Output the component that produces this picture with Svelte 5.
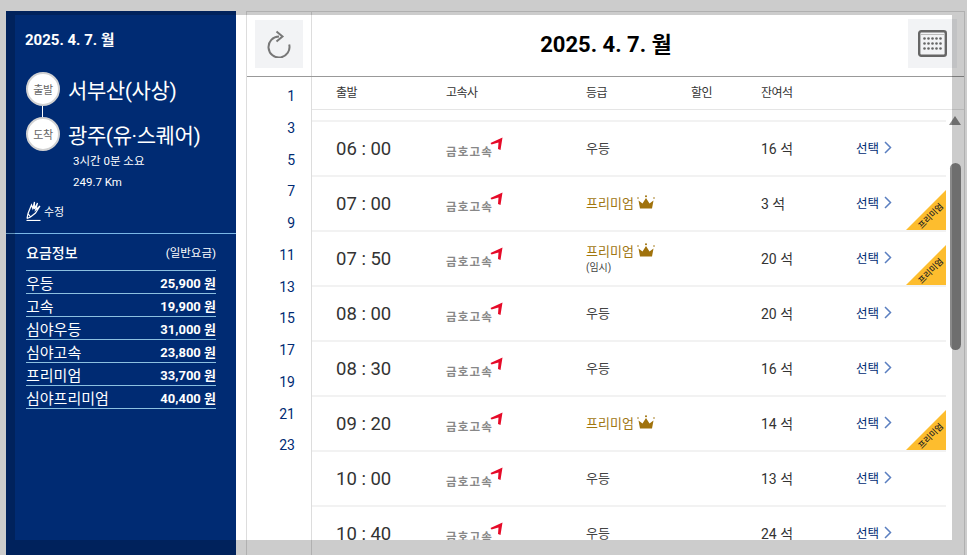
<script>
  // Fare table and departures for the selected route
  const fares = [
    { name: '우등', price: '25,900 원' },
    { name: '고속', price: '19,900 원' },
    { name: '심야우등', price: '31,000 원' },
    { name: '심야고속', price: '23,800 원' },
    { name: '프리미엄', price: '33,700 원' },
    { name: '심야프리미엄', price: '40,400 원' }
  ];

  const hours = [1, 3, 5, 7, 9, 11, 13, 15, 17, 19, 21, 23];

  const rows = [
    { time: '06 : 00', grade: '우등', seats: '16 석' },
    { time: '07 : 00', grade: '프리미엄', seats: '3 석', premium: true },
    { time: '07 : 50', grade: '프리미엄', seats: '20 석', premium: true, temp: true },
    { time: '08 : 00', grade: '우등', seats: '20 석' },
    { time: '08 : 30', grade: '우등', seats: '16 석' },
    { time: '09 : 20', grade: '프리미엄', seats: '14 석', premium: true },
    { time: '10 : 00', grade: '우등', seats: '13 석' },
    { time: '10 : 40', grade: '우등', seats: '24 석' }
  ];
</script>

<div class="modal">
  <aside class="side">
    <div class="date">2025. 4. 7. 월</div>
    <div class="route">
      <div class="stop">
        <span class="dot">출발</span>
        <span class="place">서부산(사상)</span>
      </div>
      <div class="stop">
        <span class="dot">도착</span>
        <span class="place">광주(유·스퀘어)</span>
      </div>
    </div>
    <div class="meta">3시간 0분 소요</div>
    <div class="meta">249.7 Km</div>
    <div class="edit">
      <svg width="15" height="20" viewBox="0 0 15 20" fill="none" stroke="#fff" stroke-width="1.2">
        <path d="M1 17.5 L2 12.5 L5.5 4 L6.8 7.5 L8.5 1 L8.2 8 L11.5 2 L9.6 9 L14 5 L9.5 12 L4.5 16 L1 17.5 M2 12.5 L4.5 16" />
        <path d="M0.5 19.5 H14.5" />
      </svg>
      <span>수정</span>
    </div>
    <div class="fares">
      <div class="fare-head">
        <strong>요금정보</strong>
        <span>(일반요금)</span>
      </div>
      {#each fares as fare}
        <div class="fare">
          <span>{fare.name}</span>
          <b>{fare.price}</b>
        </div>
      {/each}
    </div>
  </aside>

  <section class="main">
    <header class="top">
      <div class="top-left">
        <button class="icon-btn" aria-label="새로고침">
          <svg width="28" height="28" viewBox="0 0 28 28" fill="none" stroke="#777" stroke-width="2">
            <path d="M14 6.5 A10.5 10.5 0 1 0 24.2 14.5" />
            <path d="M11.5 1.5 L17.5 6.5 L11.5 11.5" />
          </svg>
        </button>
      </div>
      <h1>2025. 4. 7. 월</h1>
      <button class="icon-btn cal" aria-label="달력">
        <svg width="30" height="28" viewBox="0 0 30 28">
          <rect x="1.2" y="1.2" width="26.6" height="24.6" rx="2" fill="none" stroke="#666" stroke-width="2.4" />
          <path d="M3 4.5 H26" stroke="#bbb" stroke-width="1" />
          {#each [8.5, 13.5, 18.5] as y}
            {#each [6.5, 10.5, 14.5, 18.5, 22.5] as x}
              <circle cx={x} cy={y} r="1.3" fill="#666" />
            {/each}
          {/each}
        </svg>
      </button>
    </header>

    <div class="body">
      <div class="hours">
        {#each hours as h}
          <div>{h}</div>
        {/each}
      </div>
      <div class="content">
        <div class="cols head">
          <span>출발</span>
          <span>고속사</span>
          <span>등급</span>
          <span>할인</span>
          <span>잔여석</span>
          <span></span>
        </div>
        <div class="scroller">
          <div class="list">
            {#each rows as row}
              <div class="cols row">
                <span class="time">{row.time}</span>
                <span class="logo">
                  <span class="logo-text">금호고속</span>
                  <svg width="14" height="14" viewBox="0 0 14 14">
                    <path d="M0.5 6 L12.5 0.5 L10.5 13 L8 12 L8.5 5.5 L1.5 7.5 Z" fill="#e60a28" />
                  </svg>
                </span>
                <span class="grade" class:gold={row.premium}>
                  <span class="grade-line">
                    {row.grade}
                    {#if row.premium}
                      <svg width="18" height="15" viewBox="0 0 18 15">
                        <path d="M3 13.5 L1.5 5.5 L5.5 8.5 L9 3 L12.5 8.5 L16.5 5.5 L15 13.5 Z" fill="#a0720c" />
                        <circle cx="9" cy="1.2" r="1" fill="#a0720c" />
                        <circle cx="1" cy="3" r="0.8" fill="#a0720c" />
                        <circle cx="17" cy="3" r="0.8" fill="#a0720c" />
                      </svg>
                    {/if}
                  </span>
                  {#if row.temp}
                    <small>(임시)</small>
                  {/if}
                </span>
                <span></span>
                <span class="seats">{row.seats}</span>
                <span class="pick">
                  선택
                  <svg width="8" height="13" viewBox="0 0 8 13" fill="none" stroke="#5b7fc0" stroke-width="1.5">
                    <path d="M1 1 L6.5 6.5 L1 12" />
                  </svg>
                </span>
                {#if row.premium}
                  <span class="ribbon"><em>프리미엄</em></span>
                {/if}
              </div>
            {/each}
          </div>
          <div class="rail">
            <div class="arrow"></div>
            <div class="thumb"></div>
          </div>
        </div>
      </div>
    </div>
  </section>
</div>

<div class="shade"></div>

<style>
  :global(body) {
    overflow: hidden;
    background: #fff;
  }

  .modal {
    display: flex;
    width: 961px;
    height: 544px;
    margin: 11px 0 0 6px;
    font-family: Roboto, "Noto Sans CJK KR", sans-serif;
    color: #333;
  }

  /* Left panel */
  .side {
    flex: none;
    width: 230px;
    margin-right: 10px;
    padding-top: 19px;
    box-sizing: border-box;
    background: #002b73;
    color: #fff;
  }

  .date {
    margin-left: 19px;
    font-size: 15px;
    font-weight: 700;
    line-height: 20px;
  }

  .route {
    display: flex;
    flex-direction: column;
    gap: 11px;
    margin: 22px 0 0 20px;
  }

  .stop {
    display: flex;
    align-items: center;
    gap: 8px;
    height: 34px;
    position: relative;
  }

  .dot {
    flex: none;
    display: flex;
    align-items: center;
    justify-content: center;
    width: 34px;
    height: 34px;
    box-sizing: border-box;
    border: 2px solid #d2d2d2;
    border-radius: 50%;
    background: #fff;
    color: #666;
    font-size: 11px;
    letter-spacing: -0.3px;
  }

  .stop + .stop::before {
    content: '';
    position: absolute;
    left: 16px;
    top: -11px;
    width: 1px;
    height: 11px;
    background: #fff;
  }

  .place {
    font-size: 21px;
    letter-spacing: -0.4px;
    white-space: nowrap;
  }

  .meta {
    margin-left: 67px;
    font-size: 11.5px;
    line-height: 21px;
  }

  .meta:first-of-type {
    margin-top: 5px;
  }

  .edit {
    display: flex;
    align-items: center;
    gap: 3px;
    margin: 8px 0 0 20px;
    height: 20px;
    font-size: 11px;
  }

  .fares {
    margin-top: 12px;
    padding: 0 20px;
    border-top: 1px solid #7ab7e6;
  }

  .fare-head {
    display: flex;
    align-items: center;
    justify-content: space-between;
    height: 36px;
    border-bottom: 1px solid #8cc0e0;
    font-size: 14px;
  }

  .fare-head strong {
    font-weight: 500;
  }

  .fare-head span {
    font-size: 11.5px;
  }

  .fare {
    display: flex;
    align-items: center;
    justify-content: space-between;
    height: 22px;
    border-bottom: 1px solid #8cc0e0;
    font-size: 15px;
  }

  .fare b {
    font-size: 13px;
    font-weight: 700;
  }

  /* Right panel */
  .main {
    flex: none;
    display: flex;
    flex-direction: column;
    width: 719px;
    box-sizing: border-box;
    border: 1px solid #ddd;
    border-bottom: 0;
  }

  .top {
    flex: none;
    display: flex;
    align-items: center;
    height: 65px;
    box-sizing: border-box;
    border-bottom: 1px solid #999;
  }

  .top-left {
    flex: none;
    align-self: stretch;
    width: 65px;
    padding: 8px 0 0 8px;
    box-sizing: border-box;
    border-right: 1px solid #ddd;
  }

  .icon-btn {
    display: flex;
    align-items: center;
    justify-content: center;
    width: 48px;
    height: 48px;
    padding: 0;
    border: 0;
    background: #f2f3f5;
  }

  .cal {
    width: 49px;
    height: 49px;
    margin: -1px 7px 0 0;
  }

  h1 {
    flex: 1;
    margin: 0 0 4px;
    padding-right: 8px;
    text-align: center;
    font-size: 22px;
    font-weight: 700;
    color: #000;
  }

  .body {
    flex: 1;
    display: flex;
    min-height: 0;
  }

  .hours {
    flex: none;
    width: 65px;
    padding: 4px 16px 0 0;
    box-sizing: border-box;
    border-right: 1px solid #ddd;
    text-align: right;
    font-size: 14px;
    line-height: 31.75px;
    color: #002b73;
  }

  .content {
    flex: 1;
    min-width: 0;
    display: flex;
    flex-direction: column;
  }

  .cols {
    display: grid;
    grid-template-columns: 110px 140px 105px 70px 95px 1fr;
    align-items: center;
    padding-left: 24px;
  }

  .head {
    flex: none;
    height: 33px;
    padding-bottom: 3px;
    box-sizing: border-box;
    border-bottom: 1px solid #e5e5e5;
    font-size: 12px;
    letter-spacing: -0.5px;
    color: #333;
  }

  .scroller {
    display: flex;
    height: 430px;
    overflow: hidden;
  }

  .list {
    flex: none;
    width: 634px;
    padding-top: 10px;
  }

  .row {
    position: relative;
    height: 53px;
    border-top: 2px solid #f2f2f2;
    font-size: 13px;
  }

  .time {
    font-size: 18.5px;
    color: #333;
  }

  .logo {
    display: flex;
    align-items: flex-end;
    height: 24px;
    margin-bottom: 3px;
  }

  .logo-text {
    font-size: 11.5px;
    font-weight: 700;
    line-height: 13px;
    letter-spacing: 1.2px;
    color: #888;
    white-space: nowrap;
  }

  .logo svg {
    margin: 0 0 8px -3px;
  }

  .grade {
    display: flex;
    flex-direction: column;
    margin-bottom: 3px;
    font-size: 13px;
    color: #444;
  }

  .grade-line {
    display: flex;
    align-items: center;
    gap: 3px;
  }

  .gold .grade-line {
    color: #a0760f;
  }

  small {
    margin-top: 2px;
    font-size: 10px;
    line-height: 12px;
    color: #444;
  }

  .seats {
    margin-bottom: 2px;
    font-size: 14px;
  }

  .pick {
    display: flex;
    align-items: center;
    gap: 5px;
    margin-bottom: 2px;
    font-size: 12.5px;
    color: #002b73;
  }

  .ribbon {
    position: absolute;
    right: 0;
    bottom: 0;
    width: 40px;
    height: 40px;
    overflow: hidden;
    background: #fdbd2e;
    clip-path: polygon(100% 0, 100% 100%, 0 100%);
  }

  .ribbon em {
    position: absolute;
    left: 9px;
    top: 20px;
    font-size: 8.5px;
    line-height: 12px;
    font-style: normal;
    font-weight: 500;
    color: #222;
    white-space: nowrap;
    transform: rotate(-45deg);
  }

  .rail {
    flex: none;
    width: 18px;
    padding-top: 6px;
  }

  .arrow {
    width: 0;
    height: 0;
    margin-left: 3px;
    border-left: 6.5px solid transparent;
    border-right: 6.5px solid transparent;
    border-bottom: 9px solid #8a8a8a;
  }

  .thumb {
    width: 11px;
    height: 187px;
    margin: 38px 0 0 4px;
    border-radius: 6px;
    background: #8a8a8a;
  }

  /* Dim layer with a clear window over the page */
  .shade {
    position: fixed;
    left: 15px;
    top: 15px;
    width: 937px;
    height: 525px;
    box-shadow: 0 0 0 1000px rgba(0, 0, 0, 0.2);
    pointer-events: none;
  }
</style>
